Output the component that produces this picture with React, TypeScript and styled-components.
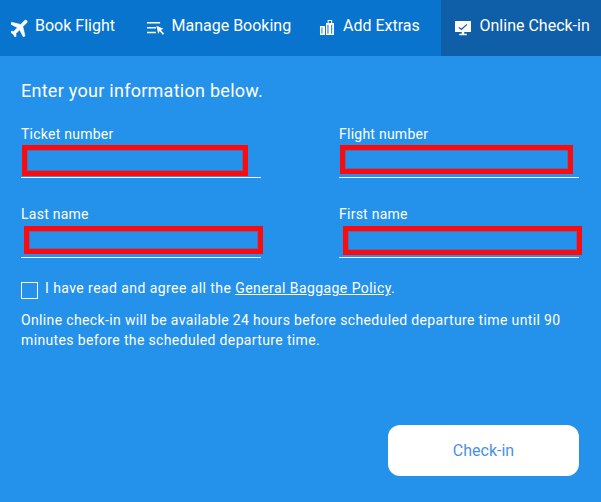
import { createGlobalStyle, styled } from 'styled-components'

const GlobalStyle = createGlobalStyle`
    html, body {
        margin: 0;
        padding: 0;
        background: #2491ea;
    }
    * {
        box-sizing: border-box;
    }
`

const Page = styled.div`
    width: 601px;
    height: 502px;
    display: flex;
    flex-direction: column;
    background: #2491ea;
    color: #fff;
    font-family: Roboto, 'Liberation Sans', sans-serif;
    overflow: hidden;
`

const Tabs = styled.div`
    height: 56px;
    display: flex;
    background: #0874ce;
`

const Tab = styled.div<{ $width: number; $pad: number; $gap: number; $active?: boolean }>`
    width: ${(p) => p.$width}px;
    display: flex;
    align-items: flex-start;
    column-gap: ${(p) => p.$gap}px;
    padding-top: 16px;
    padding-left: ${(p) => p.$pad}px;
    font-size: 16px;
    line-height: 19px;
    white-space: nowrap;
    background: ${(p) => (p.$active ? '#0f5ea8' : 'transparent')};
`

const TabIcon = styled.svg`
    width: 18px;
    height: 18px;
    margin-top: 3px;
    flex: none;
    fill: #fff;
`

const Body = styled.div`
    flex: 1;
    display: flex;
    flex-direction: column;
    padding: 24px 22px 26px 21px;
`

const Heading = styled.div`
    font-size: 18px;
    line-height: 21px;
    letter-spacing: 0.27px;
    margin-bottom: 24px;
`

const Fields = styled.div`
    display: grid;
    grid-template-columns: 240px 240px;
    column-gap: 78px;
    row-gap: 27px;
`

const Field = styled.div`
    position: relative;
    height: 53px;
    padding-top: 1px;
    border-bottom: 1px solid #fff;
`

const Label = styled.div`
    font-size: 14px;
    line-height: 16px;
    letter-spacing: 0.25px;
`

const Redaction = styled.div<{ $left: number; $top: number; $width: number; $height: number }>`
    position: absolute;
    left: ${(p) => p.$left}px;
    top: ${(p) => p.$top}px;
    width: ${(p) => p.$width}px;
    height: ${(p) => p.$height}px;
    border: 5px solid #fb0a0e;
    box-shadow: inset 0 0 0 1px #5a6bb4;
`

const AgreeRow = styled.div`
    display: flex;
    align-items: flex-start;
    margin-top: 21px;
    font-size: 14px;
    line-height: 18px;
    letter-spacing: 0.43px;
`

const Checkbox = styled.div`
    width: 17px;
    height: 17px;
    margin-top: 3px;
    margin-right: 7px;
    border: 1px solid #fff;
`

const PolicyLink = styled.span`
    text-decoration: underline;
`

const Note = styled.div`
    margin-top: 11px;
    font-size: 14px;
    line-height: 20px;
    letter-spacing: 0.36px;
`

const Footer = styled.div`
    margin-top: auto;
    display: flex;
    justify-content: flex-end;
`

const CheckInButton = styled.button`
    width: 191px;
    height: 51px;
    border: 0;
    border-radius: 12px;
    background: #fff;
    color: #4a90e6;
    font-family: inherit;
    font-size: 16px;
`

const PlaneIcon = () => (
    <TabIcon viewBox="3 3 18 18">
        <path
            transform="rotate(45 12 12)"
            stroke="#fff"
            strokeWidth="0.6"
            d="M21 16v-2l-8-5V3.5c0-.83-.67-1.5-1.5-1.5S10 2.67 10 3.5V9l-8 5v2l8-2.5V19l-2 1.5V22l3.5-1 3.5 1v-1.5L13 19v-5.5l8 2.5z"
        />
    </TabIcon>
)

const ManageIcon = () => (
    <TabIcon viewBox="0 0 24 24">
        <path d="M0 4h17.500v2H0zM0 10.500h12v2H0zM0 17h12v2H0zM12.500 9l9.500 4-3.500 1.500 4.500 5-2 1.500-4.300-5L15 20z" />
    </TabIcon>
)

const LuggageIcon = () => (
    <TabIcon viewBox="0 0 24 24">
        <path
            fillRule="evenodd"
            d="M11.500 5.300V1.300h6v4H20v16H9.300v-16zm1.300 0h3.400V2.600h-3.400zM11.300 7.500v12h1.300v-12zm5 0v12h1.300v-12zM1.300 9.300H8v12H1.300zm2 2v8h1.200v-8z"
        />
    </TabIcon>
)

const MonitorIcon = () => (
    <TabIcon viewBox="0 0 24 24">
        <path
            fillRule="evenodd"
            d="M0 2.700h21.300v14.600h-9v2.400h3.400v1.800H5.600v-1.800h3.400v-2.400H0zM5.500 10.500l-1 1 4 3.500 8-7.500-1-1-7 6.300z"
        />
    </TabIcon>
)

export default function App() {
    return (
        <Page>
            <GlobalStyle />
            <Tabs>
                <Tab $width={135} $pad={11} $gap={6}>
                    <PlaneIcon />
                    Book Flight
                </Tab>
                <Tab $width={163} $pad={12} $gap={6.5}>
                    <ManageIcon />
                    Manage Booking
                </Tab>
                <Tab $width={143} $pad={21} $gap={6}>
                    <LuggageIcon />
                    Add Extras
                </Tab>
                <Tab $width={160} $pad={14} $gap={6.5} $active>
                    <MonitorIcon />
                    Online Check-in
                </Tab>
            </Tabs>
            <Body>
                <Heading>Enter your information below.</Heading>
                <Fields>
                    <Field>
                        <Label>Ticket number</Label>
                        <Redaction $left={1} $top={20} $width={226} $height={31} />
                    </Field>
                    <Field>
                        <Label>Flight number</Label>
                        <Redaction $left={1} $top={20} $width={233} $height={29} />
                    </Field>
                    <Field>
                        <Label>Last name</Label>
                        <Redaction $left={3} $top={21} $width={239} $height={28} />
                    </Field>
                    <Field>
                        <Label>First name</Label>
                        <Redaction $left={4} $top={21} $width={239} $height={29} />
                    </Field>
                </Fields>
                <AgreeRow>
                    <Checkbox />
                    <span>
                        I have read and agree all the <PolicyLink>General Baggage Policy</PolicyLink>.
                    </span>
                </AgreeRow>
                <Note>
                    Online check-in will be available 24 hours before scheduled departure time until 90
                    <br />
                    minutes before the scheduled departure time.
                </Note>
                <Footer>
                    <CheckInButton>Check-in</CheckInButton>
                </Footer>
            </Body>
        </Page>
    )
}
